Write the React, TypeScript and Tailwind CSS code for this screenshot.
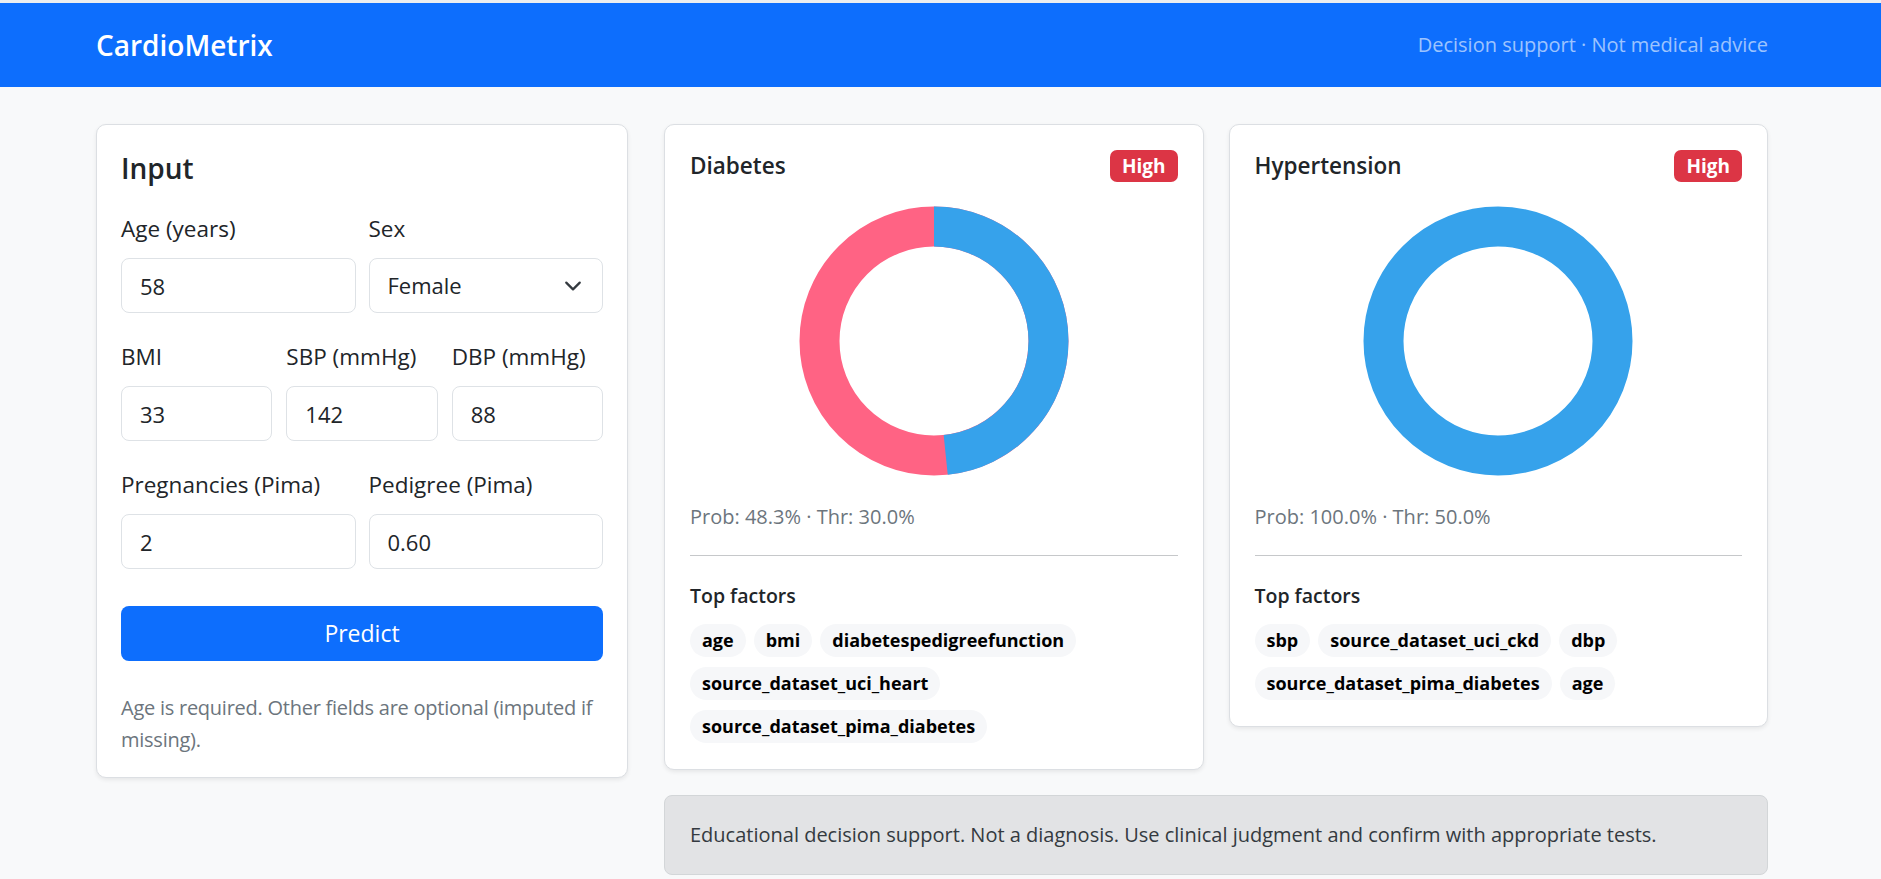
import React from 'react';

type Risk = {
  title: string;
  prob: number;
  thr: number;
  factors: string[];
};

const risks: Risk[] = [
  {
    title: 'Diabetes',
    prob: 0.483,
    thr: 0.3,
    factors: ['age', 'bmi', 'diabetespedigreefunction', 'source_dataset_uci_heart', 'source_dataset_pima_diabetes'],
  },
  {
    title: 'Hypertension',
    prob: 1,
    thr: 0.5,
    factors: ['sbp', 'source_dataset_uci_ckd', 'dbp', 'source_dataset_pima_diabetes', 'age'],
  },
];

const Donut: React.FC<{ prob: number }> = ({ prob }) => {
  const r = 114.5;
  const c = 2 * Math.PI * r;
  return (
    <svg width="270" height="270" viewBox="0 0 270 270">
      {prob < 1 && <circle cx="135" cy="135" r={r} fill="none" stroke="#ff6384" strokeWidth="40" />}
      <circle
        cx="135"
        cy="135"
        r={r}
        fill="none"
        stroke="#36a2eb"
        strokeWidth="40"
        strokeDasharray={prob < 1 ? `${prob * c} ${c}` : undefined}
        transform="rotate(-90 135 135)"
      />
    </svg>
  );
};

const Field: React.FC<{ label: string; value: string }> = ({ label, value }) => (
  <div className="flex flex-col min-w-0">
    <label className="text-[22.5px] leading-[30px] text-[#212529] mb-[14px] whitespace-nowrap">{label}</label>
    <input
      readOnly
      value={value}
      className="h-[55px] w-full rounded-[8px] border border-[#dee2e6] bg-white px-[18px] text-[22px] text-[#212529] outline-none"
    />
  </div>
);

const RiskCard: React.FC<{ risk: Risk }> = ({ risk }) => (
  <div className="flex-1 min-w-0 bg-white border border-[#dcdfe3] rounded-[10px] shadow-[0_2px_4px_rgba(0,0,0,0.075)] pt-[25px] px-[25px] pb-[26px]">
    <div className="h-[32px] flex items-center justify-between">
      <h3 className="text-[22.5px] leading-[30px] font-semibold text-[#212529]">{risk.title}</h3>
      <span className="h-[32px] px-[12px] rounded-[7px] bg-[#dc3545] text-white text-[19px] font-bold flex items-center">
        High
      </span>
    </div>
    <div className="mt-[24px] h-[270px] flex justify-center">
      <Donut prob={risk.prob} />
    </div>
    <p className="mt-[26px] text-[20px] leading-[30px] text-[#6c757d]">
      Prob: {(risk.prob * 100).toFixed(1)}% · Thr: {(risk.thr * 100).toFixed(1)}%
    </p>
    <hr className="mt-[23px] border-0 border-t border-[#c6c8ca]" />
    <div className="mt-[25px] text-[19.5px] leading-[30px] font-semibold text-[#212529]">Top factors</div>
    <div className="mt-[13px] flex flex-wrap gap-x-[8px] gap-y-[10px]">
      {risk.factors.map((f) => (
        <span key={f} className="h-[33px] px-[12px] rounded-full bg-[#f6f7f9] text-[18px] font-bold text-black flex items-center">
          {f}
        </span>
      ))}
    </div>
  </div>
);

export default function App() {
  return (
    <div className="min-h-screen bg-[#f8f9fa] font-['Open_Sans','Noto_Sans',sans-serif] text-[#212529]">
      <div className="h-[3px] bg-[#eceef0]" />
      <nav className="h-[84px] bg-[#0d6efd] flex items-center justify-between pl-[96px] pr-[113px]">
        <span className="text-[28px] font-semibold text-white">CardioMetrix</span>
        <span className="text-[20px] text-white/60">Decision support · Not medical advice</span>
      </nav>

      <main className="pl-[96px] pr-[113px] pt-[37px] flex items-start gap-[36px]">
        {/* Input form */}
        <div className="w-[532px] shrink-0 bg-white border border-[#dcdfe3] rounded-[10px] shadow-[0_2px_4px_rgba(0,0,0,0.075)] pt-[25px] px-[24px] pb-[21px]">
          <h2 className="text-[28px] leading-[36px] font-semibold">Input</h2>

          <div className="mt-[28px] grid grid-cols-2 gap-x-[13px]">
            <Field label="Age (years)" value="58" />
            <div className="flex flex-col">
              <label className="text-[22.5px] leading-[30px] mb-[14px]">Sex</label>
              <div className="relative">
                <select
                  defaultValue="Female"
                  className="appearance-none h-[55px] w-full rounded-[8px] border border-[#dee2e6] bg-white px-[18px] text-[22px] text-[#212529] outline-none"
                >
                  <option>Female</option>
                  <option>Male</option>
                </select>
                <svg
                  viewBox="0 0 16 16"
                  className="absolute right-[21px] top-1/2 -translate-y-1/2 w-[18px] h-[18px] pointer-events-none"
                  fill="none"
                  stroke="#343a40"
                  strokeWidth="2"
                  strokeLinecap="round"
                  strokeLinejoin="round"
                >
                  <path d="m2 5 6 6 6-6" />
                </svg>
              </div>
            </div>
          </div>

          <div className="mt-[29px] grid grid-cols-3 gap-x-[14px]">
            <Field label="BMI" value="33" />
            <Field label="SBP (mmHg)" value="142" />
            <Field label="DBP (mmHg)" value="88" />
          </div>

          <div className="mt-[29px] grid grid-cols-2 gap-x-[13px]">
            <Field label="Pregnancies (Pima)" value="2" />
            <Field label="Pedigree (Pima)" value="0.60" />
          </div>

          <button className="mt-[37px] w-full h-[55px] rounded-[8px] bg-[#0d6efd] text-white text-[23px]">Predict</button>

          <p className="mt-[31px] text-[20px] leading-[32px] tracking-[-0.25px] text-[#6c757d]">
            Age is required. Other fields are optional (imputed if missing).
          </p>
        </div>

        {/* Results */}
        <div className="flex-1 min-w-0 flex flex-col gap-[25px]">
          <div className="flex items-start gap-[25px]">
            {risks.map((r) => (
              <RiskCard key={r.title} risk={r} />
            ))}
          </div>
          <div className="border border-[#d3d6d8] bg-[#e2e3e5] rounded-[8px] px-[25px] py-[24px] text-[20px] leading-[30px] text-[#343a40]">
            Educational decision support. Not a diagnosis. Use clinical judgment and confirm with appropriate tests.
          </div>
        </div>
      </main>
    </div>
  );
}
